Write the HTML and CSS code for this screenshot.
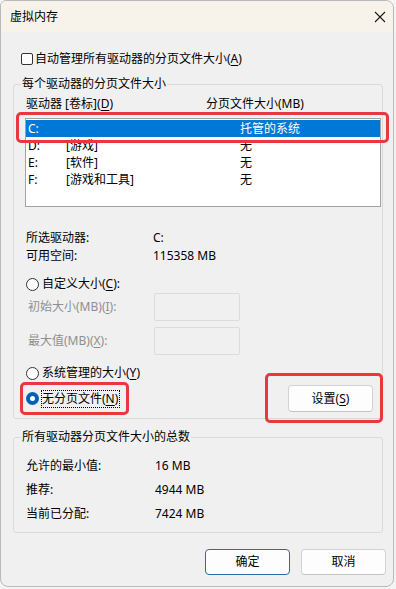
FILE: index.html
```html
<!DOCTYPE html>
<html lang="zh-CN">
<head>
<meta charset="utf-8">
<title>虚拟内存</title>
<link rel="stylesheet" href="styles.css">
</head>
<body>
<div class="window">
  <div class="titlebar">
    <span class="title">虚拟内存</span>
    <svg class="close" width="12" height="12" viewBox="0 0 12 12"><path d="M1 1 L11 11 M11 1 L1 11" stroke="#1a1a1a" stroke-width="1.1" fill="none"/></svg>
  </div>
  <div class="content">
    <label class="check-row"><span class="checkbox"></span><span>自动管理所有驱动器的分页文件大小(<u>A</u>)</span></label>

    <fieldset class="group group-drives">
      <legend>每个驱动器的分页文件大小</legend>
      <div class="list-head"><span class="h1">驱动器 [卷标](<u>D</u>)</span><span>分页文件大小(MB)</span></div>
      <div class="list">
        <div class="row selected"><span class="c1">C:</span><span class="c2"></span><span class="c3">托管的系统</span></div>
        <div class="row"><span class="c1">D:</span><span class="c2">[游戏]</span><span class="c3">无</span></div>
        <div class="row"><span class="c1">E:</span><span class="c2">[软件]</span><span class="c3">无</span></div>
        <div class="row"><span class="c1">F:</span><span class="c2">[游戏和工具]</span><span class="c3">无</span></div>
      </div>
      <div class="info">
        <span>所选驱动器:</span><span>C:</span>
        <span>可用空间:</span><span>115358 MB</span>
      </div>
      <label class="radio-row r-custom"><span class="radio"></span><span>自定义大小(<u>C</u>):</span></label>
      <div class="field-row f1"><span class="disabled">初始大小(MB)(<u>I</u>):</span><span class="input"></span></div>
      <div class="field-row f2"><span class="disabled">最大值(MB)(<u>X</u>):</span><span class="input"></span></div>
      <label class="radio-row r-system"><span class="radio"></span><span>系统管理的大小(<u>Y</u>)</span></label>
      <div class="none-row">
        <label class="radio-row r-none"><span class="radio checked"></span><span class="focus">无分页文件(<u>N</u>)</span></label>
        <button class="btn btn-set">设置(<u>S</u>)</button>
      </div>
    </fieldset>

    <fieldset class="group group-total">
      <legend>所有驱动器分页文件大小的总数</legend>
      <div class="totals">
        <span>允许的最小值:</span><span>16 MB</span>
        <span>推荐:</span><span>4944 MB</span>
        <span>当前已分配:</span><span>7424 MB</span>
      </div>
    </fieldset>

    <div class="actions">
      <button class="btn btn-ok">确定</button>
      <button class="btn">取消</button>
    </div>
  </div>

  <div class="mark mark-row"></div>
  <div class="mark mark-radio"></div>
  <div class="mark mark-button"></div>
</div>
</body>
</html>
```

FILE: styles.css
```css
* { box-sizing: border-box; }
html, body {
  margin: 0;
  padding: 0;
  background: #f4f4f4;
}
body {
  font-family: "Noto Sans", "Noto Sans CJK SC", sans-serif;
  font-size: 12px;
  line-height: 16px;
  color: #000;
}
u { text-decoration: underline; text-underline-offset: 2px; }

.window {
  position: relative;
  width: 394px;
  height: 587px;
  background: #f0f0f0;
  border: 1px solid #b9b9b9;
  border-radius: 6px 8px 8px 8px;
  overflow: hidden;
}
.titlebar {
  height: 31px;
  background: #f7f3ea;
  display: flex;
  align-items: center;
  padding: 0 0 0 9px;
}
.title { flex: 1; font-size: 12px; padding-top: 1px; }
.close { margin-right: 7px; margin-top: 1px; }

.content {
  padding: 0 10px 0 12px;
}

.check-row {
  display: flex;
  align-items: center;
  height: 16px;
  margin-top: 19px;
  padding-left: 8px;
}
.checkbox {
  width: 12px;
  height: 12px;
  border: 1px solid #333;
  border-radius: 2px;
  background: #fff;
  margin-right: 2px;
}

.group {
  margin: 0;
  padding: 0;
  border: 1px solid #dadada;
  border-radius: 3px;
  min-width: 0;
}
.group legend {
  padding: 0 1px;
  margin-left: 7px;
  line-height: 16px;
}
.group-drives { margin-top: 9px; padding-bottom: 6px; }

.list-head {
  display: flex;
  margin-top: 4px;
  padding-left: 12px;
}
.list-head .h1 { width: 180px; }

.list {
  margin: 6px 0 0 11px;
  width: 356px;
  height: 89px;
  background: #fff;
  border: 1px solid #a3a3a3;
  padding-top: 1px;
}
.row {
  display: flex;
  height: 17px;
  line-height: 17px;
  padding-left: 2px;
}
.row.selected { background: #0078d7; color: #fff; }
.c1 { width: 38px; }
.c2 { width: 174px; }

.info {
  display: grid;
  grid-template-columns: 127px 1fr;
  grid-auto-rows: 18px;
  align-items: center;
  margin-top: 22px;
  padding-left: 12px;
}

.radio-row {
  display: flex;
  align-items: center;
  height: 16px;
  padding-left: 12px;
}
.radio {
  width: 13px;
  height: 13px;
  border: 1px solid #333;
  border-radius: 50%;
  background: #fff;
  margin-right: 3px;
}
.radio.checked {
  border: 4px solid #005fb8;
  background: #fff;
}
.r-custom { margin-top: 11px; }
.r-system { margin-top: 10px; }

.field-row {
  display: flex;
  align-items: center;
  height: 28px;
  padding-left: 14px;
}
.field-row .disabled { width: 126px; color: #8f8f8f; }
.f1 { margin-top: 1px; }
.f2 { margin-top: 6px; }
.input {
  width: 86px;
  height: 28px;
  border: 1px solid #dcdcdc;
  border-radius: 2px;
  background: #f0f0f0;
}

.none-row {
  display: flex;
  align-items: center;
  height: 27px;
  margin-top: 4px;
  padding-right: 9px;
}
.none-row .radio-row { padding-left: 12px; }
.focus { outline: 1px dotted #000; outline-offset: 0; padding: 0 1px 0 0; }

.btn {
  font-family: inherit;
  font-size: 12px;
  line-height: 16px;
  height: 27px;
  width: 85px;
  background: #fdfdfd;
  border: 1px solid #d2d2d2;
  border-bottom-color: #c4c4c4;
  border-radius: 4px;
  color: #000;
  padding: 0;
}
.btn-set { margin-left: auto; }

.group-total { margin-top: 10px; padding-bottom: 6px; }
.totals {
  display: grid;
  grid-template-columns: 129px 1fr;
  grid-auto-rows: 24px;
  align-items: center;
  padding: 9px 0 0 12px;
}

.actions {
  display: flex;
  justify-content: flex-end;
  gap: 11px;
  margin: 16px -3px 0 0;
}
.actions .btn { height: 26px; }
.btn-ok { border: 1px solid #2e6aa8; }

.mark {
  position: absolute;
  border: 3px solid #e8383d;
  border-radius: 5px;
}
.mark-row { left: 15px; top: 111px; width: 373px; height: 31px; }
.mark-radio { left: 19px; top: 381px; width: 109px; height: 33px; }
.mark-button { left: 264px; top: 372px; width: 118px; height: 50px; }
```
